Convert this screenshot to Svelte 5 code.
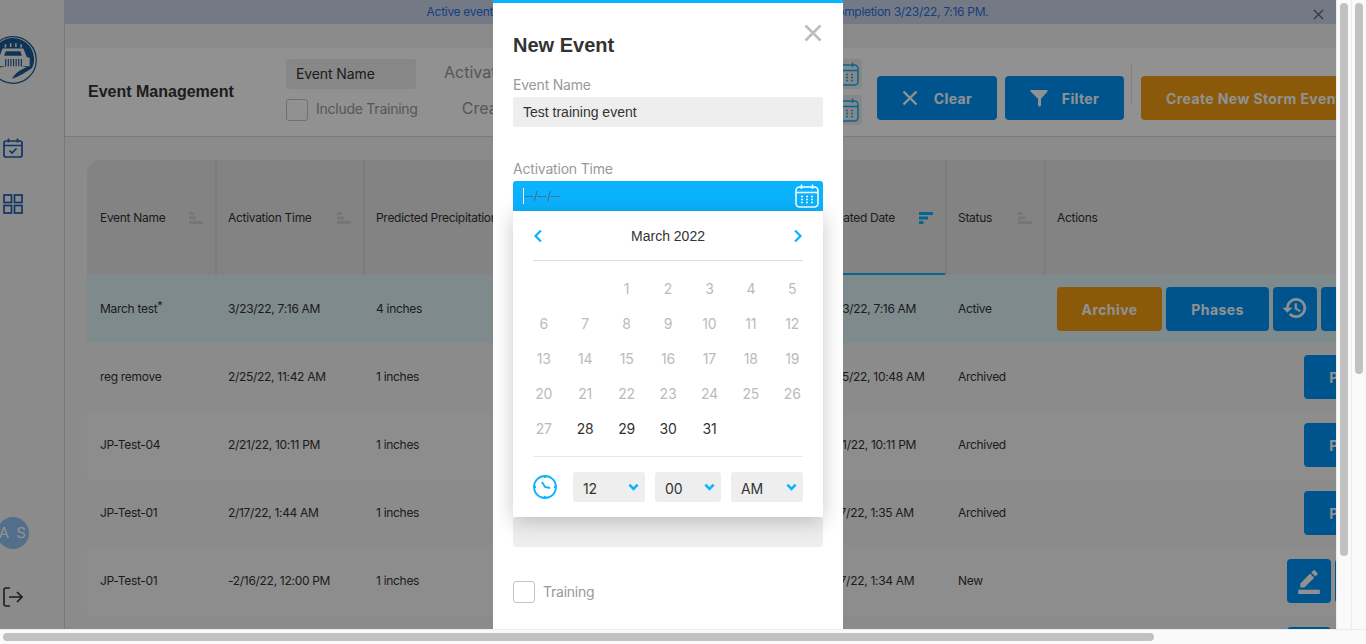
<script>
	const rows = [
		{ name: 'March test', star: true, time: '3/23/22, 7:16 AM', rain: '4 inches', created: '3/23/22, 7:16 AM', status: 'Active', kind: 'active' },
		{ name: 'reg remove', time: '2/25/22, 11:42 AM', rain: '1 inches', created: '2/25/22, 10:48 AM', status: 'Archived', kind: 'archived' },
		{ name: 'JP-Test-04', time: '2/21/22, 10:11 PM', rain: '1 inches', created: '2/21/22, 10:11 PM', status: 'Archived', kind: 'archived' },
		{ name: 'JP-Test-01', time: '2/17/22, 1:44 AM', rain: '1 inches', created: '2/17/22, 1:35 AM', status: 'Archived', kind: 'archived' },
		{ name: 'JP-Test-01', time: '-2/16/22, 12:00 PM', rain: '1 inches', created: '2/17/22, 1:34 AM', status: 'New', kind: 'new' },
		{ name: 'JP-Test-01', time: '2/16/22, 12:00 PM', rain: '1 inches', created: '2/16/22, 1:34 AM', status: 'New', kind: 'new' }
	];

	const columns = [
		{ label: 'Event Name' },
		{ label: 'Activation Time' },
		{ label: 'Predicted Precipitation' },
		{ label: 'Created Date', active: true },
		{ label: 'Status' },
		{ label: 'Actions', plain: true }
	];

	// March 2022 starts on a Tuesday, only the 28th onward can be picked
	const days = [null, null, ...Array.from({ length: 31 }, (_, i) => i + 1)];

	const hiddenFields = ['Predicted Precipitation', 'Estimated Completion', 'Description', 'Notes'];
</script>

{#snippet calendar()}
	<svg class="cal" viewBox="0 0 24 24" fill="none" stroke="currentColor" stroke-width="1.5">
		<rect x="1" y="3" width="22" height="20" rx="3.5" />
		<path d="M1 8.5h22M6.5 0.5v4.5M17.5 0.5v4.5" />
		<path d="M6 12.5h2M11 12.5h2M16 12.5h2M6 15.5h2M11 15.5h2M16 15.5h2M6 18.5h2M11 18.5h2M16 18.5h2" stroke-width="1.7" />
	</svg>
{/snippet}

{#snippet sortIcon(active)}
	<svg class="sort" class:on={active} viewBox="0 0 14 12" fill="currentColor">
		{#if active}
			<path d="M0 0h14v3H0zM0 4.500h9v3H0zM0 9h4.500v3H0z" />
		{:else}
			<path d="M0 0h4.500v3H0zM0 4.500h7v3H0zM0 9h14v3H0z" />
		{/if}
	</svg>
{/snippet}

{#snippet chevron()}
	<svg class="chev" viewBox="0 0 12 8" fill="none" stroke="#0bb3ff" stroke-width="2.800">
		<path d="M1.500 1.500 6 6l4.500-4.500" />
	</svg>
{/snippet}

{#snippet historyIcon()}
	<svg class="btn-ico hist" viewBox="0 0 24 24" fill="currentColor" stroke="currentColor" stroke-width="0.6">
		<path d="M13 3a9 9 0 0 0-9 9H1l3.890 3.890.07.14L9 12H6c0-3.870 3.130-7 7-7s7 3.130 7 7-3.130 7-7 7c-1.930 0-3.680-.79-4.940-2.060l-1.420 1.420A8.954 8.954 0 0 0 13 21a9 9 0 0 0 0-18zm-1 5v5l4.280 2.540.72-1.210-3.500-2.080V8H12z" />
	</svg>
{/snippet}

<div class="screen">
	<div class="upper">
		<div class="stage">
			<aside class="sidebar">
				<svg class="logo" viewBox="0 0 46 46">
					<circle cx="23" cy="23" r="22.300" fill="#f4f4f4" stroke="#1b5a94" stroke-width="1.200" />
					<path d="M3 24a20 20 0 0 1 40-4c.5 4 0 7.500-2 11-6 4-12 8-19 10 3-5 8-9 14-11-10-3-23-2-32 3-1-3-1.500-6-1-9z" fill="#1b5a94" />
					<path d="M10 20l3-8h20l3 8 3 1v8H7v-8z" fill="#f4f4f4" />
					<path d="M14.500 19l1.500-4.500h14l1.500 4.500z" fill="#1b5a94" />
					<path d="M16 22v7M18.500 22v7M21 22v7M23.500 22v7M26 22v7M28.500 22v7M31 22v7" stroke="#1b5a94" stroke-width="1.100" />
					<path d="M15 8h1.500v3H15zM20 7h1.500v3.500H20zM25 7h1.500v3.500H25zM30 8h1.500v3H30z" fill="#f4f4f4" />
				</svg>
				<svg class="side-ico first" viewBox="0 0 20 20" fill="none" stroke="#1c5fb5" stroke-width="1.700">
					<rect x="1" y="3" width="18" height="16" rx="2" />
					<path d="M1 7.500h18M5.500 0.500v4M14.500 0.500v4M6.500 12.500l2.500 2.500 4.500-4.500" />
				</svg>
				<svg class="side-ico second" viewBox="0 0 20 20" fill="none" stroke="#1c5fb5" stroke-width="1.700">
					<rect x="1" y="1" width="7.500" height="7.500" />
					<rect x="11.500" y="1" width="7.500" height="7.500" />
					<rect x="1" y="11.500" width="7.500" height="7.500" />
					<rect x="11.500" y="11.500" width="7.500" height="7.500" />
				</svg>
				<div class="avatar">A S</div>
				<svg class="side-ico logout" viewBox="0 0 20 20" fill="none" stroke="#333" stroke-width="1.600">
					<path d="M7 1H3a2 2 0 0 0-2 2v14a2 2 0 0 0 2 2h4M6 10h13M14 5l5 5-5 5" />
				</svg>
			</aside>

			<main class="main">
				<div class="banner">
					<span class="banner-text">Active event March test was activated on 3/23/22, 7:16 AM, with estimated completion 3/23/22, 7:16 PM.</span>
					<svg class="banner-x" viewBox="0 0 12 12" fill="none" stroke="#666" stroke-width="1.500">
						<path d="M1 1l10 10M11 1 1 11" />
					</svg>
				</div>

				<header class="head">
					<h1>Event Management</h1>
					<div class="filter-a">
						<div class="fake-input">Event Name</div>
						<div class="check-row">
							<span class="box"></span>
							<span class="check-text">Include Training</span>
						</div>
					</div>
					<div class="filter-b">
						<span class="flabel">Activation Time</span>
						<div class="fake-input date">{@render calendar()}</div>
						<span class="flabel">Created Date</span>
						<div class="fake-input date">{@render calendar()}</div>
					</div>
					<button class="btn blue clear">
						<svg class="btn-ico small" viewBox="0 0 16 16" fill="none" stroke="currentColor" stroke-width="2.400">
							<path d="M1.500 1.500l13 13M14.500 1.500l-13 13" />
						</svg>
						Clear
					</button>
					<button class="btn blue filter">
						<svg class="btn-ico filter-ico" viewBox="0 0 18 18" fill="currentColor">
							<path d="M1.200 1h15.600c.8 0 1.200.9.700 1.500L11 9.800v6.200a1.500 1.500 0 0 1-3 0V9.800L.5 2.500C0 1.900.4 1 1.200 1z" />
						</svg>
						Filter
					</button>
					<span class="vsep"></span>
					<button class="btn orange create">Create New Storm Event</button>
				</header>

				<section class="table">
					<div class="tr thead">
						{#each columns as col}
							<div class="th" class:active={col.active}>
								<span>{col.label}</span>
								{#if !col.plain}{@render sortIcon(col.active)}{/if}
							</div>
						{/each}
					</div>
					{#each rows as row, i}
						<div class="tr" class:current={row.kind === 'active'} class:alt={i % 2 === 0}>
							<div class="td">{row.name}{#if row.star}<sup>*</sup>{/if}</div>
							<div class="td">{row.time}</div>
							<div class="td">{row.rain}</div>
							<div class="td">{row.created}</div>
							<div class="td">{row.status}</div>
							<div class="td actions" class:start={row.kind === 'active'}>
								{#if row.kind === 'active'}
									<button class="btn orange archive">Archive</button>
									<button class="btn blue phases">Phases</button>
									<button class="btn blue square">{@render historyIcon()}</button>
									<button class="btn blue phases">Report</button>
								{:else if row.kind === 'archived'}
									<button class="btn blue phases">Phases</button>
									<button class="btn blue square">{@render historyIcon()}</button>
									<button class="btn blue square">{@render historyIcon()}</button>
								{:else}
									<button class="btn blue square">
										<svg class="btn-ico edit" viewBox="0 0 24 24" fill="currentColor">
											<path d="M22 24H2v-4h20v4zM13.060 5.190l3.750 3.750L7.750 18H4v-3.750l9.060-9.060zm4.820 2.680-3.750-3.750 1.830-1.830a.996.996 0 0 1 1.410 0l2.340 2.340c.39.39.39 1.020 0 1.410l-1.830 1.830z" />
										</svg>
									</button>
									<button class="btn blue activate">Activate</button>
									<button class="btn blue square">{@render historyIcon()}</button>
								{/if}
							</div>
						</div>
					{/each}
				</section>
			</main>

			<div class="backdrop"></div>

			<div class="modal">
				<svg class="modal-x" viewBox="0 0 18 18" fill="none" stroke="#bdbdbd" stroke-width="2.600">
					<path d="M1.500 1.500l15 15M16.500 1.500l-15 15" />
				</svg>
				<h2>New Event</h2>

				<div class="field">
					<span class="label">Event Name</span>
					<div class="input filled">Test training event</div>
				</div>

				<div class="field picker">
					<span class="label">Activation Time</span>
					<div class="input focused">
						<span class="caret"></span>
						<span class="mask">--/--/--</span>
						{@render calendar()}
					</div>

					<div class="dropdown">
						<div class="month">
							<svg class="nav" viewBox="0 0 10 14" fill="none" stroke="#0bb3ff" stroke-width="2.200">
								<path d="M8 1.500 2.500 7 8 12.500" />
							</svg>
							<span>March 2022</span>
							<svg class="nav" viewBox="0 0 10 14" fill="none" stroke="#0bb3ff" stroke-width="2.200">
								<path d="M2 1.500 7.500 7 2 12.500" />
							</svg>
						</div>
						<div class="days">
							{#each days as d}
								<span class="day" class:open={d >= 28}>{d ?? ''}</span>
							{/each}
						</div>
						<div class="time">
							<svg class="clock" viewBox="0 0 24 24" fill="none" stroke="#0bb3ff" stroke-width="1.800">
								<circle cx="12" cy="12" r="11" />
								<path d="M12 1v2M12 21v2M1 12h2M21 12h2M9 7l3 5 5 1" />
							</svg>
							<div class="select hour"><span>12</span>{@render chevron()}</div>
							<div class="select minute"><span>00</span>{@render chevron()}</div>
							<div class="select ampm"><span>AM</span>{@render chevron()}</div>
						</div>
					</div>
				</div>

				{#each hiddenFields as label}
					<div class="field">
						<span class="label">{label}</span>
						<div class="input"></div>
					</div>
				{/each}

				<div class="training">
					<span class="box"></span>
					<span class="training-text">Training</span>
				</div>
			</div>
		</div>

		<div class="vbar"><span class="thumb long"></span></div>
		<div class="vbar"><span class="thumb short"></span></div>
	</div>
	<div class="hbar"><span class="hthumb"></span></div>
</div>

<style>
	:global(body) {
		margin: 0;
		overflow: hidden;
	}

	.screen {
		width: 1366px;
		height: 644px;
		display: flex;
		flex-direction: column;
		font-family: Inter, 'Noto Sans', sans-serif;
		color: #333;
		background: #fafafa;
	}

	.upper {
		flex: 1;
		min-height: 0;
		display: flex;
	}

	.stage {
		position: relative;
		flex: 1;
		min-width: 0;
		display: flex;
		overflow: hidden;
		background: #f4f4f4;
	}

	/* scrollbars */
	.vbar {
		width: 15px;
		flex: none;
		box-sizing: border-box;
		border-left: 1px solid #ececec;
		padding: 3px 3px 0 3px;
	}

	.thumb {
		display: block;
		width: 8px;
		border-radius: 4px;
		background: #c1c1c1;
	}

	.thumb.long { height: 553px; }
	.thumb.short { height: 371px; }

	.hbar {
		height: 15px;
		flex: none;
		box-sizing: border-box;
		border-top: 1px solid #ececec;
		padding: 3px 0 0 3px;
	}

	.hthumb {
		display: block;
		width: 1151px;
		height: 8px;
		border-radius: 4px;
		background: #c1c1c1;
	}

	/* sidebar */
	.sidebar {
		width: 65px;
		flex: none;
		box-sizing: border-box;
		border-right: 1px solid #d2d2d2;
		display: flex;
		flex-direction: column;
		align-items: flex-start;
		padding: 36px 0 22px 3px;
	}

	.logo {
		width: 48px;
		height: 48px;
		margin-left: -14px;
		flex: none;
	}

	.side-ico {
		width: 20px;
		height: 20px;
		flex: none;
	}

	.side-ico.first { margin-top: 54px; }
	.side-ico.second { margin-top: 36px; }

	.avatar {
		width: 32px;
		height: 32px;
		margin: auto 0 0 -6px;
		border-radius: 50%;
		background: #8fc4f5;
		color: #fff;
		font-size: 15px;
		line-height: 32px;
		text-align: center;
		letter-spacing: 1.500px;
	}

	.side-ico.logout { margin-top: 38px; }

	/* page */
	.main {
		flex: 1;
		min-width: 0;
	}

	.banner {
		position: relative;
		height: 24px;
		background: #ccd6ea;
		color: #2a6fdc;
		font-size: 12px;
		letter-spacing: -0.3px;
		line-height: 24px;
		text-align: center;
		white-space: nowrap;
		overflow: hidden;
	}

	.banner-text {
		display: inline-block;
		margin-left: 14px;
	}

	.banner-x {
		position: absolute;
		right: 12px;
		top: 9px;
		width: 11px;
		height: 11px;
	}

	.head {
		margin-top: 24px;
		background: #fff;
		border-bottom: 1px solid #d6d6d6;
		display: flex;
		align-items: flex-start;
		padding: 11px 0 0 23px;
		height: 77px;
		white-space: nowrap;
	}

	h1 {
		width: 198px;
		flex: none;
		margin: 23px 0 0;
		font-family: 'Liberation Sans', sans-serif;
		font-size: 16px;
		line-height: 20px;
		font-weight: 700;
		color: #333;
	}

	.filter-a {
		width: 130px;
		flex: none;
	}

	.fake-input {
		height: 30px;
		box-sizing: border-box;
		border-radius: 3px;
		background: #eee;
		font-size: 14px;
		letter-spacing: -0.1px;
		line-height: 30px;
		padding-left: 10px;
	}

	.check-row {
		margin-top: 10px;
		display: flex;
		align-items: center;
		gap: 8px;
		font-size: 14px;
		letter-spacing: -0.25px;
		color: #999;
	}

	.check-text {
		margin-top: -3px;
	}

	.box {
		width: 22px;
		height: 22px;
		flex: none;
		box-sizing: border-box;
		border: 1px solid #c4c4c4;
		border-radius: 3px;
		background: #fff;
	}

	.filter-b {
		width: 417px;
		flex: none;
		margin-left: 28px;
		display: grid;
		grid-template-columns: 1fr 291px;
		column-gap: 10px;
		row-gap: 6px;
		align-items: center;
	}

	.flabel {
		text-align: right;
		font-size: 16px;
		margin-bottom: 4px;
		color: #999;
	}

	.fake-input.date {
		display: flex;
		justify-content: flex-end;
		align-items: center;
		padding-right: 3px;
		color: #0bb3ff;
	}

	.cal {
		width: 24px;
		height: 24px;
		flex: none;
	}

	.btn {
		height: 44px;
		box-sizing: border-box;
		border: 0;
		border-radius: 4px;
		color: #fff;
		font-family: Inter, sans-serif;
		font-size: 14px;
		font-weight: 700;
		letter-spacing: 0.4px;
		display: inline-flex;
		align-items: center;
		justify-content: center;
		flex: none;
		padding: 0;
		white-space: nowrap;
	}

	.blue { background: #0095fa; }
	.orange { background: #f29e12; }

	.clear, .filter, .create { margin-top: 17px; }

	.clear {
		width: 120px;
		margin-left: 16px;
		gap: 16px;
	}

	.filter {
		width: 119px;
		margin-left: 8px;
		gap: 14px;
	}

	.vsep {
		width: 1px;
		height: 40px;
		margin: 5px 9px 0 7px;
		background: #e4e4e4;
		flex: none;
	}

	.create {
		width: 230px;
		justify-content: flex-start;
		padding-left: 25px;
	}

	.btn-ico {
		width: 24px;
		height: 24px;
		flex: none;
	}

	.btn-ico.hist {
		width: 26px;
		height: 26px;
		margin-top: -2px;
	}

	.btn-ico.edit {
		width: 26px;
		height: 26px;
	}

	.btn-ico.small {
		width: 16px;
		height: 16px;
	}

	.btn-ico.filter-ico {
		width: 18px;
		height: 18px;
	}

	/* table */
	.table {
		width: 1437px;
		margin: 23px 0 0 22px;
		font-size: 12px;
		letter-spacing: -0.3px;
	}

	.tr {
		display: grid;
		grid-template-columns: 129px 148px 448px 134px 99px 479px;
		height: 68px;
		background: #f4f4f4;
	}

	.tr.alt { background: #f8f8f8; }
	.tr.current { background: #dff2f7; }

	.thead {
		height: 115px;
		background: #e6e6e6;
		border-top-left-radius: 14px;
	}

	.th {
		display: flex;
		align-items: center;
		justify-content: space-between;
		box-sizing: border-box;
		height: 115px;
		margin-right: -1px;
		padding: 0 12px 0 12px;
		border-right: 2px solid #dbdbdb;
		white-space: nowrap;
	}

	.th:first-child,
	.td:first-child {
		padding-left: 13px;
	}

	.th:last-child {
		border-right: 0;
		margin-right: 0;
	}

	.th.active {
		box-shadow: inset 0 -2px 0 #0bb3ff;
	}

	.sort {
		width: 14px;
		height: 12px;
		color: #cfcfcf;
		flex: none;
	}

	.sort.on { color: #0bb3ff; }

	.td {
		display: flex;
		align-items: center;
		box-sizing: border-box;
		padding-left: 12px;
		padding-bottom: 1px;
		white-space: nowrap;
	}

	sup {
		font-size: 11px;
		line-height: 1;
		align-self: center;
		margin-bottom: 6px;
	}

	.actions {
		justify-content: flex-end;
		gap: 4px;
		padding: 0 21px 0 12px;
	}

	.actions.start { justify-content: flex-start; }

	.archive { width: 105px; }
	.phases { width: 103px; }
	.square { width: 44px; }
	.activate { width: 120px; }

	/* dialog */
	.backdrop {
		position: absolute;
		inset: 0;
		background: rgba(0, 0, 0, 0.43);
	}

	.modal {
		position: absolute;
		left: 493px;
		top: 0;
		bottom: 0;
		width: 350px;
		box-sizing: border-box;
		background: #fff;
		border-top: 3px solid #0bb3ff;
		padding: 27px 20px 0;
		overflow: hidden;
	}

	.modal-x {
		position: absolute;
		top: 21px;
		right: 20px;
		width: 20px;
		height: 18px;
	}

	h2 {
		margin: 0 0 17px;
		font-family: 'Liberation Sans', sans-serif;
		font-size: 20px;
		line-height: 30px;
		font-weight: 700;
		color: #333;
	}

	.field {
		height: 84px;
	}

	.picker {
		position: relative;
	}

	.label {
		display: block;
		height: 16px;
		margin-bottom: 4px;
		font-size: 14px;
		line-height: 16px;
		letter-spacing: -0.2px;
		color: #999;
	}

	.input {
		height: 30px;
		box-sizing: border-box;
		border-radius: 3px;
		background: #eee;
		padding-left: 10px;
		font-size: 14px;
		line-height: 30px;
	}

	.input.filled {
		font-family: 'Liberation Sans', sans-serif;
		color: #333;
	}

	.input.focused {
		background: #0bb3ff;
		display: flex;
		align-items: center;
		color: #fff;
		border-radius: 3px 3px 0 0;
		padding-right: 4px;
	}

	.caret {
		width: 1px;
		height: 16px;
		background: #fff;
		flex: none;
	}

	.mask {
		flex: 1;
		font-size: 12px;
		letter-spacing: -0.7px;
		color: #4a6b80;
	}

	.dropdown {
		position: absolute;
		left: 0;
		right: 0;
		top: 50px;
		height: 306px;
		box-sizing: border-box;
		background: #fff;
		box-shadow: 0 4px 20px rgba(0, 0, 0, 0.22);
		padding: 0 10px;
		z-index: 1;
	}

	.month {
		height: 50px;
		margin: 0 10px;
		display: flex;
		align-items: center;
		justify-content: space-between;
		border-bottom: 1px solid #ddd;
		font-family: 'Liberation Sans', sans-serif;
		font-size: 14px;
		box-sizing: border-box;
	}

	.nav {
		width: 10px;
		height: 14px;
		flex: none;
	}

	.days {
		display: grid;
		grid-template-columns: repeat(7, 1fr);
		grid-auto-rows: 35px;
		padding: 10px 0 10px;
		font-size: 14px;
		letter-spacing: -0.2px;
	}

	.day {
		display: flex;
		align-items: center;
		justify-content: center;
		color: #bbb;
	}

	.day.open { color: #333; }

	.time {
		margin: 0 10px;
		height: 60px;
		box-sizing: border-box;
		border-top: 1px solid #e8e8e8;
		display: flex;
		align-items: center;
	}

	.clock {
		width: 24px;
		height: 24px;
		flex: none;
		margin-right: 16px;
	}

	.select {
		height: 30px;
		box-sizing: border-box;
		border-radius: 3px;
		background: #eee;
		display: flex;
		align-items: center;
		justify-content: space-between;
		padding: 0 6px 0 10px;
		font-size: 14px;
		letter-spacing: -0.2px;
		color: #333;
		flex: none;
	}

	.select span { padding-top: 4px; }

	.hour { width: 72px; }
	.minute { width: 66px; margin-left: 10px; }
	.ampm { width: 72px; margin-left: 10px; }

	.chev {
		width: 11px;
		height: 8px;
		margin-top: 0;
	}

	.training {
		display: flex;
		align-items: center;
		gap: 8px;
		font-size: 14px;
		letter-spacing: -0.25px;
		color: #999;
	}

	.training-text {
		margin-top: -1px;
	}
</style>
